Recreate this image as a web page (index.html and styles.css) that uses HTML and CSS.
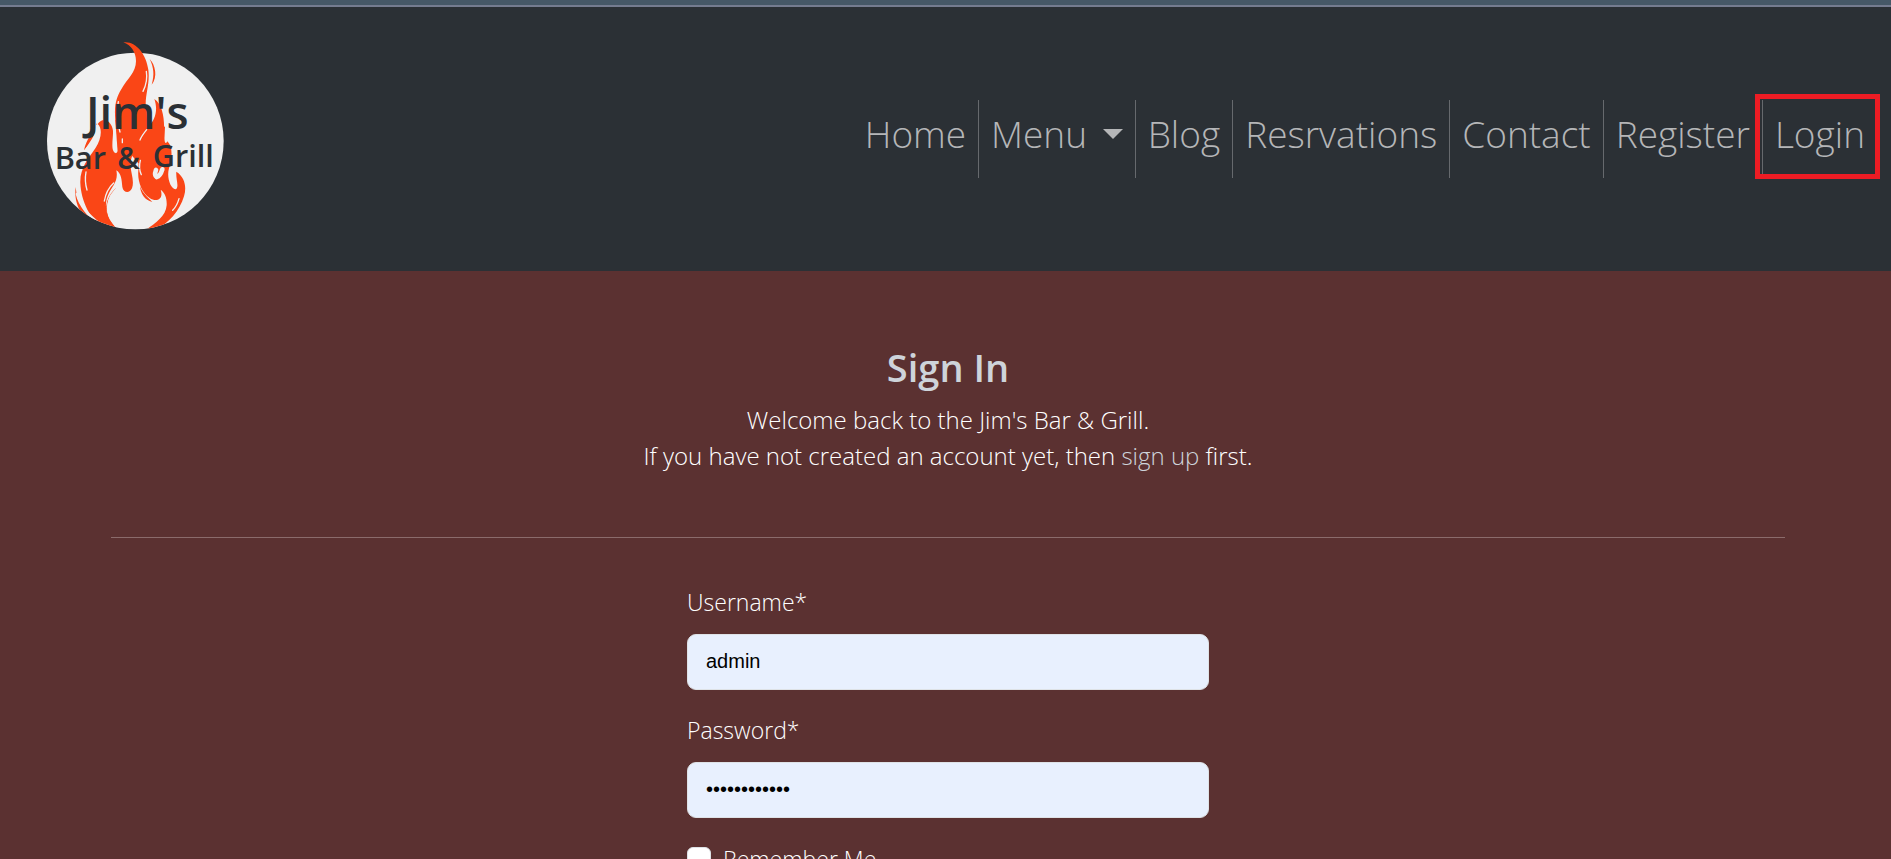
FILE: index.html
```html
<!DOCTYPE html>
<html lang="en">
<head>
<meta charset="utf-8">
<title>Jim's Bar &amp; Grill - Sign In</title>
<link rel="stylesheet" href="styles.css">
</head>
<body>
<header class="site-header">
  <a class="logo" href="#" aria-label="Jim's Bar &amp; Grill">
    <svg viewBox="0 0 630 630" width="210" height="210">
      <defs><clipPath id="disc"><path d="M0 0H630V333H581A265 265 0 0 1 51 333H0Z"/></clipPath></defs>
      <circle cx="316" cy="333" r="265" fill="#f0f0f0"/>
      <g clip-path="url(#disc)">
        <path fill="#fa4616" d="M280 37C318 32 349 73 355 119C361 166 341 203 349 239C352 267 350 285 356 290C375 269 385 242 373 207C397 222 404 266 402 301C400 337 407 346 412 334C431 354 425 386 417 415C409 442 422 478 438 478C448 468 437 448 439 425C466 442 470 474 462 499C448 545 414 583 370 602H345C374 581 408 559 410 526C411 506 406 489 392 479C402 508 379 518 359 504C335 488 322 453 325 421C325 391 330 366 331 345C315 360 300 379 302 407C302 429 314 451 306 475C299 491 280 489 277 471C275 450 274 430 259 421C266 453 246 469 236 491C222 520 223 559 262 596H225C180 573 153 511 151 460C149 414 175 386 197 353C213 329 219 295 203 282C221 256 246 275 249 302C250 329 240 364 258 370C276 357 261 323 258 287C250 232 258 204 273 179C292 145 318 128 318 93C318 68 303 44 280 37Z"/>
        <path fill="#fa4616" d="M340 280L405 290L400 400L325 400L300 370ZM359 87C376 104 384 142 365 164C374 134 371 112 359 87ZM201 279C189 311 168 326 162 361C180 339 199 325 201 279ZM137 471C140 516 164 551 202 581C160 569 130 528 137 471ZM260 472C229 502 220 542 247 590C219 550 223 504 260 472ZM330 468C337 490 352 499 367 516C344 510 332 492 330 468Z"/>
        <path fill="#fa4616" d="M256 270L350 240L350 300L325 340L265 395Z"/>
        <g fill="none" stroke="#f0f0f0" stroke-linecap="round">
          <path stroke-width="4" d="M349 124Q354 154 339 184M265 215Q256 262 270 306M331 391Q325 415 334 434M168 426Q163 453 171 480M251 459Q229 479 223 513M350 299Q334 319 330 330M277 327V338M447 506Q441 528 428 541"/>
          <path stroke-width="8" d="M199 288C203 319 180 340 167 362M141 492C150 530 176 556 210 583M244 499C230 529 235 561 259 588"/>
          <path stroke-width="14" d="M378 420Q372 436 380 441Q391 438 397 418"/>
        </g>
      </g>
      <g class="logo-text">
        <text class="logo-big" x="168" y="298">Jim's</text>
        <text x="74" y="416">Bar</text>
        <text x="262" y="416">&amp;</text>
        <text x="368" y="412">Grill</text>
      </g>
    </svg>
  </a>
  <nav class="nav" aria-label="Main">
    <a class="nav-item" href="#">Home</a>
    <a class="nav-item" href="#">Menu <span class="caret"></span></a>
    <a class="nav-item" href="#">Blog</a>
    <a class="nav-item" href="#">Resrvations</a>
    <a class="nav-item" href="#">Contact</a>
    <a class="nav-item" href="#">Register</a>
    <a class="nav-item marked" href="#">Login</a>
  </nav>
</header>
<main class="content">
  <section class="intro">
    <h1>Sign In</h1>
    <p>Welcome back to the Jim's Bar &amp; Grill.<br>If you have not created an account yet, then <a href="#">sign up</a> first.</p>
  </section>
  <hr>
  <form class="login">
    <label for="user">Username*</label>
    <input class="field" id="user" type="text" value="admin">
    <label for="pass">Password*</label>
    <input class="field" id="pass" type="password" value="abcdefghijkl">
    <div class="remember">
      <input id="remember" type="checkbox">
      <label for="remember">Remember Me</label>
    </div>
  </form>
</main>
</body>
</html>
```
FILE: styles.css
```css
* { box-sizing: border-box; }

body {
  margin: 0;
  height: 100vh;
  overflow: hidden;
  background: #5b3131;
  color: #fff;
  font-family: "Open Sans", sans-serif;
  font-weight: 300;
  font-size: 23px;
  line-height: 36px;
  border-top: 5px solid #465867;
}

.site-header {
  display: flex;
  justify-content: space-between;
  align-items: center;
  padding: 23px 14px 31px 30px;
  border-top: 2px solid #757c90;
  background: #2b3035;
}

.logo, .logo svg { display: block; }

.logo-text {
  fill: #2b3035;
  font-family: "Open Sans", sans-serif;
  font-weight: 600;
  font-size: 92px;
}

.logo-big { font-size: 136px; }

.nav {
  display: flex;
  margin-top: 8px;
}

.nav-item {
  position: relative;
  height: 78px;
  padding: 8px 12px;
  color: #b5b6b8;
  font-size: 37px;
  line-height: 52px;
  text-decoration: none;
}

.nav-item + .nav-item { border-left: 1px solid #66696d; }

.caret {
  display: inline-block;
  margin-left: 6px;
  vertical-align: 9px;
  border: 10px solid transparent;
  border-top-color: #b5b6b8;
  border-bottom: 0;
}

.marked::after {
  content: "";
  position: absolute;
  inset: -6px -3px -1px -8px;
  border: 5px solid #ed1c24;
}

.content { padding: 71px 106px 0 111px; }

.intro { text-align: center; }

h1 {
  margin: 0 0 10px;
  color: #ced4da;
  font-size: 38px;
  font-weight: 600;
  line-height: 50px;
}

p {
  margin: 0;
  font-size: 24px;
  font-weight: 350;
}

p a {
  color: #ced4da;
  font-weight: 300;
  text-decoration: none;
}

hr {
  margin: 63px 0 46px;
  border: 0;
  border-top: 1px solid #8b6b6b;
}

.login {
  display: flex;
  flex-direction: column;
  width: 522px;
  margin: 0 auto;
}

.field {
  height: 56px;
  margin: 14px 0 22px;
  padding: 0 18px 2px;
  border: 1px solid #dee2e6;
  border-radius: 9px;
  background: #e8f0fe;
  color: #000;
  font: 20px "Liberation Sans", Arial, sans-serif;
}

.remember {
  display: flex;
  align-items: center;
  gap: 12px;
  margin-top: 1px;
}

.remember input {
  appearance: none;
  width: 24px;
  height: 24px;
  margin: 0;
  border: 1px solid #dee2e6;
  border-radius: 6px;
  background: #fff;
}
```
